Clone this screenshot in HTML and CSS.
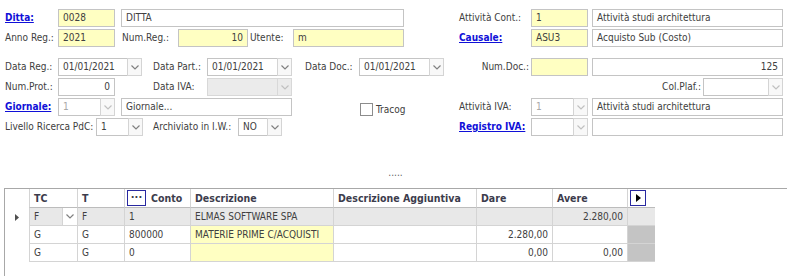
FILE: index.html
```html
<!DOCTYPE html>
<html lang="it">
<head>
    <meta charset="UTF-8">
    <title>Prima nota</title>
    <link rel="stylesheet" href="styles.css">
</head>
<body>

    <div class="form">
        <div class="row">
            <div class="left">
                <a class="lbl link w53">Ditta:</a>
                <div class="box yel w57">0028</div>
                <div class="box w283 ml6">DITTA</div>
            </div>
            <div class="right">
                <span class="lbl w72">Attività Cont.:</span>
                <div class="box yel w57">1</div>
                <div class="box w191 ml4">Attività studi architettura</div>
            </div>
        </div>
        <div class="row">
            <div class="left">
                <span class="lbl w53">Anno Reg.:</span>
                <div class="box yel w57">2021</div>
                <span class="lbl w56 ml7">Num.Reg.:</span>
                <div class="box yel num w70">10</div>
                <span class="lbl w43 ml2">Utente:</span>
                <div class="box yel w111">m</div>
            </div>
            <div class="right">
                <a class="lbl link w72">Causale:</a>
                <div class="box yel w57">ASU3</div>
                <div class="box w191 ml4">Acquisto Sub (Costo)</div>
            </div>
        </div>

        <div class="row first">
            <div class="left">
                <span class="lbl w53">Data Reg.:</span>
                <div class="combo w84"><div class="edit">01/01/2021</div><div class="btn"><svg width="8" height="5"><polyline points="0.5,0.5 4,4 7.5,0.5" /></svg></div></div>
                <span class="lbl w54 ml11">Data Part.:</span>
                <div class="combo w85"><div class="edit">01/01/2021</div><div class="btn"><svg width="8" height="5"><polyline points="0.5,0.5 4,4 7.5,0.5" /></svg></div></div>
                <span class="lbl w54 ml13">Data Doc.:</span>
                <div class="combo w85"><div class="edit">01/01/2021</div><div class="btn"><svg width="8" height="5"><polyline points="0.5,0.5 4,4 7.5,0.5" /></svg></div></div>
            </div>
            <div class="right">
                <span class="lbl w72 rt">Num.Doc.:</span>
                <div class="box yel w57"></div>
                <div class="box num w191 ml4">125</div>
            </div>
        </div>
        <div class="row">
            <div class="left">
                <span class="lbl w53">Num.Prot.:</span>
                <div class="box num w57">0</div>
                <span class="lbl w54 ml38">Data IVA:</span>
                <div class="combo off grey w85"><div class="edit"></div><div class="btn"><svg width="8" height="5"><polyline points="0.5,0.5 4,4 7.5,0.5" /></svg></div></div>
            </div>
            <div class="right">
                <span class="lbl w244 rt">Col.Plaf.:</span>
                <div class="combo off w80"><div class="edit"></div><div class="btn"><svg width="8" height="5"><polyline points="0.5,0.5 4,4 7.5,0.5" /></svg></div></div>
            </div>
        </div>
        <div class="row">
            <div class="left">
                <a class="lbl link w53">Giornale:</a>
                <div class="combo off w57"><div class="edit">1</div><div class="btn"><svg width="8" height="5"><polyline points="0.5,0.5 4,4 7.5,0.5" /></svg></div></div>
                <div class="box w171 ml6">Giornale...</div>
                <label class="check"><span class="tick"></span>Tracog</label>
            </div>
            <div class="right">
                <span class="lbl w72">Attività IVA:</span>
                <div class="combo off w57"><div class="edit">1</div><div class="btn"><svg width="8" height="5"><polyline points="0.5,0.5 4,4 7.5,0.5" /></svg></div></div>
                <div class="box w191 ml4">Attività studi architettura</div>
            </div>
        </div>
        <div class="row">
            <div class="left">
                <span class="lbl w91">Livello Ricerca PdC:</span>
                <div class="combo w47"><div class="edit">1</div><div class="btn"><svg width="8" height="5"><polyline points="0.5,0.5 4,4 7.5,0.5" /></svg></div></div>
                <span class="lbl w85 ml10">Archiviato in I.W.:</span>
                <div class="combo w44"><div class="edit">NO</div><div class="btn"><svg width="8" height="5"><polyline points="0.5,0.5 4,4 7.5,0.5" /></svg></div></div>
            </div>
            <div class="right">
                <a class="lbl link w72">Registro IVA:</a>
                <div class="combo off w57"><div class="edit"></div><div class="btn"><svg width="8" height="5"><polyline points="0.5,0.5 4,4 7.5,0.5" /></svg></div></div>
                <div class="box w191 ml4"></div>
            </div>
        </div>
    </div>

    <div class="dots">.....</div>

    <div class="grid">
        <div class="grow head">
            <div class="cell ind"></div>
            <div class="cell">TC</div>
            <div class="cell">T</div>
            <div class="cell"><span class="hbtn">···</span>Conto</div>
            <div class="cell">Descrizione</div>
            <div class="cell">Descrizione Aggiuntiva</div>
            <div class="cell">Dare</div>
            <div class="cell">Avere</div>
            <div class="cell"><span class="hbtn arrow"><svg width="5" height="8"><polygon points="0,0 5,4 0,8" /></svg></span></div>
        </div>
        <div class="grow sel">
            <div class="cell ind"><svg width="4" height="7"><polygon points="0,0 4,3.5 0,7" /></svg></div>
            <div class="cell tc">F<span class="btn"><svg width="8" height="5"><polyline points="0.5,0.5 4,4 7.5,0.5" /></svg></span></div>
            <div class="cell">F</div>
            <div class="cell">1</div>
            <div class="cell">ELMAS SOFTWARE SPA</div>
            <div class="cell"></div>
            <div class="cell num"></div>
            <div class="cell num">2.280,00</div>
            <div class="cell"></div>
        </div>
        <div class="grow">
            <div class="cell ind"></div>
            <div class="cell">G</div>
            <div class="cell">G</div>
            <div class="cell">800000</div>
            <div class="cell yel">MATERIE PRIME C/ACQUISTI</div>
            <div class="cell"></div>
            <div class="cell num">2.280,00</div>
            <div class="cell num"></div>
            <div class="cell end"></div>
        </div>
        <div class="grow">
            <div class="cell ind"></div>
            <div class="cell">G</div>
            <div class="cell">G</div>
            <div class="cell">0</div>
            <div class="cell yel"></div>
            <div class="cell"></div>
            <div class="cell num">0,00</div>
            <div class="cell num">0,00</div>
            <div class="cell end"></div>
        </div>
    </div>

</body>
</html>
```

FILE: styles.css
```css
html {
    background-color: #FFFFFF;
}
body {
    margin: 0;
    font-family: "DejaVu Sans Condensed", "DejaVu Sans", sans-serif;
    font-size: 10px;
    color: #404040;
}

/* testata */
.form {
    padding: 9px 0 0 5px;
}
.row {
    display: flex;
    height: 18px;
    margin-bottom: 2px;
}
.row.first {
    margin-top: 11px;
}
.left {
    width: 454px;
    flex-shrink: 0;
    display: flex;
    align-items: center;
}
.right {
    display: flex;
    align-items: center;
}
.lbl {
    flex-shrink: 0;
    white-space: nowrap;
    line-height: 18px;
}
.lbl.rt {
    text-align: right;
    padding-right: 2px;
    box-sizing: border-box;
}
.link {
    color: #1010d8;
    font-weight: bold;
    text-decoration: underline;
}
.box {
    flex-shrink: 0;
    height: 18px;
    box-sizing: border-box;
    border: 1px solid #c4c4c4;
    background: #FFFFFF;
    padding: 0 4px;
    line-height: 16px;
    white-space: nowrap;
    overflow: hidden;
}
.yel {
    background: #FFFFC2;
}
.num {
    text-align: right;
}

.combo {
    flex-shrink: 0;
    height: 18px;
    display: flex;
}
.combo .edit {
    flex: 1;
    box-sizing: border-box;
    border: 1px solid #c4c4c4;
    background: #FFFFFF;
    padding: 0 4px;
    line-height: 16px;
}
.btn {
    width: 15px;
    box-sizing: border-box;
    border: 1px solid #d4d4d4;
    margin-left: -1px;
    background: #F8F8F8;
    display: flex;
    align-items: center;
    justify-content: center;
}
.btn svg polyline {
    fill: none;
    stroke: #808080;
    stroke-width: 1.2;
}
.combo.off .edit {
    color: #a8a8a8;
}
.combo.off .btn svg polyline {
    stroke: #c0c0c0;
}
.combo.grey .edit,
.combo.grey .btn {
    background: #EBEBEB;
    border-color: #d8d8d8;
}

.check {
    margin-left: 68px;
    align-self: flex-end;
    display: flex;
    align-items: center;
    line-height: 13px;
}
.check .tick {
    width: 13px;
    height: 13px;
    box-sizing: border-box;
    border: 1px solid #8c8c8c;
    background: #FFFFFF;
    margin-right: 3px;
}

.w43 { width: 43px; }
.w44 { width: 44px; }
.w47 { width: 47px; }
.w53 { width: 53px; }
.w54 { width: 54px; }
.w56 { width: 56px; }
.w57 { width: 57px; }
.w70 { width: 70px; }
.w72 { width: 72px; }
.w80 { width: 80px; }
.w84 { width: 84px; }
.w85 { width: 85px; }
.w91 { width: 91px; }
.w111 { width: 111px; }
.w171 { width: 171px; }
.w191 { width: 191px; }
.w244 { width: 244px; }
.w283 { width: 283px; }
.ml2 { margin-left: 2px; }
.ml4 { margin-left: 4px; }
.ml6 { margin-left: 6px; }
.ml7 { margin-left: 7px; }
.ml10 { margin-left: 10px; }
.ml11 { margin-left: 11px; }
.ml13 { margin-left: 13px; }
.ml38 { margin-left: 38px; }

.dots {
    text-align: center;
    color: #606060;
    height: 14px;
    line-height: 14px;
    margin: 30px 0 8px;
    padding-left: 4px;
}

/* righe */
.grid {
    margin-left: 4px;
    border-left: 1px solid #a8a8a8;
    border-top: 1px solid #a8a8a8;
    height: 90px;
}
.grow {
    display: grid;
    grid-template-columns: 24px 48px 47px 66px 143px 143px 76px 75px 28px;
    height: 18px;
}
.grow.head {
    height: 19px;
}
.cell {
    box-sizing: border-box;
    border-left: 1px solid #d4d4d4;
    border-bottom: 1px solid #d4d4d4;
    padding: 0 4px;
    line-height: 17px;
    white-space: nowrap;
    overflow: hidden;
    display: flex;
    align-items: center;
}
.cell.num {
    justify-content: flex-end;
}
.cell.ind {
    border-left: none;
    border-bottom: none;
    justify-content: center;
    border-right: 1px solid #d4d4d4;
    margin-right: -1px;
}
.cell.ind svg polygon {
    fill: #505050;
}
.head .cell {
    font-weight: bold;
    font-size: 10.5px;
    color: #3c3c4c;
    border-bottom: 1px solid #bcbcbc;
}
.head .cell.ind {
    border-bottom: none;
}
.hbtn {
    width: 19px;
    height: 16px;
    box-sizing: border-box;
    border: 1px solid #2828a0;
    background: #FFFFFF;
    margin: 0 5px 0 -2px;
    display: flex;
    align-items: center;
    justify-content: center;
    line-height: 10px;
    font-size: 11px;
}
.hbtn.arrow svg polygon {
    fill: #000000;
}
.sel .cell {
    background: #E8E8E8;
}
.sel .cell.ind {
    background: #FFFFFF;
}
.cell.tc {
    justify-content: space-between;
    padding-right: 0;
}
.cell.tc .btn {
    height: 17px;
    background: #FFFFFF;
    border: none;
    border-left: 1px solid #d4d4d4;
}
.cell.yel {
    background: #FFFFC2;
}
.cell.end {
    background: #C4C4C4;
}
```
